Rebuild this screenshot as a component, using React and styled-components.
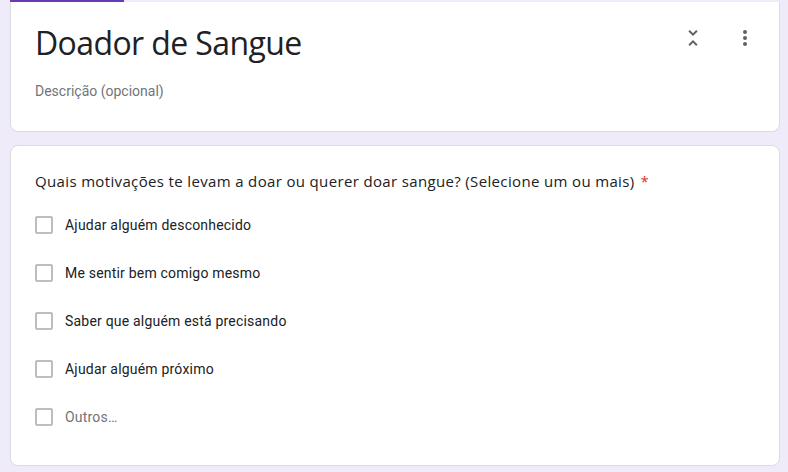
import React from "react";
import styled, { createGlobalStyle } from "styled-components";

const GlobalStyle = createGlobalStyle`
  html, body {
    margin: 0;
    padding: 0;
    background: #f0ebf8;
  }
  body {
    font-family: Roboto, "Liberation Sans", Arial, sans-serif;
  }
`;

const Page = styled.div`
  width: 788px;
  height: 472px;
  overflow: hidden;
  padding: 0 8px 0 10px;
  box-sizing: border-box;
  display: flex;
  flex-direction: column;
`;

const TabIndicator = styled.div`
  width: 114px;
  height: 2px;
  background: #673ab7;
`;

const Card = styled.div`
  background: #fff;
  border: 1px solid #dadce0;
  border-radius: ${(p) => (p.$flatTop ? "0 0 8px 8px" : "8px")};
  border-top: ${(p) => (p.$flatTop ? "none" : "1px solid #dadce0")};
  box-sizing: border-box;
  margin-top: ${(p) => p.$gap || 0}px;
  position: relative;
`;

const HeaderCard = styled(Card)`
  height: 130px;
  padding: 20px 24px 0 24px;
`;

const Title = styled.div`
  font-family: "Open Sans", Roboto, sans-serif;
  font-size: 32px;
  line-height: 42px;
  color: #202124;
  letter-spacing: -0.6px;
`;

const Description = styled.div`
  margin-top: 19px;
  font-size: 14px;
  color: #70757a;
`;

const Actions = styled.div`
  position: absolute;
  top: 24px;
  right: 22px;
  display: flex;
  gap: 28px;
  align-items: center;
`;

const IconBtn = styled.div`
  width: 24px;
  height: 24px;
  display: flex;
  align-items: center;
  justify-content: center;
  color: #5f6368;
`;

const QuestionCard = styled(Card)`
  height: 321px;
  padding: 23px 24px 0 24px;
`;

const Question = styled.div`
  font-family: "Open Sans", Roboto, sans-serif;
  font-size: 15px;
  line-height: 24px;
  color: #202124;
  letter-spacing: 0.35px;
`;

const Required = styled.span`
  color: #d93025;
  margin-left: 6px;
`;

const Options = styled.div`
  margin-top: 8px;
  display: flex;
  flex-direction: column;
`;

const Option = styled.label`
  display: flex;
  align-items: center;
  height: 48px;
  gap: 12px;
  font-size: 14px;
  color: ${(p) => (p.$muted ? "#70757a" : "#202124")};
  letter-spacing: 0.2px;
`;

const Box = styled.span`
  width: 18px;
  height: 18px;
  border: 2px solid #bdbdbd;
  border-radius: 2px;
  box-sizing: border-box;
  flex-shrink: 0;
`;

const options = [
  "Ajudar alguém desconhecido",
  "Me sentir bem comigo mesmo",
  "Saber que alguém está precisando",
  "Ajudar alguém próximo",
];

export default function App() {
  return (
    <>
      <GlobalStyle />
      <Page>
        <TabIndicator />
        <HeaderCard $flatTop>
          <Title>Doador de Sangue</Title>
          <Description>Descrição (opcional)</Description>
          <Actions>
            <IconBtn>
              <svg width="24" height="24" viewBox="0 0 24 24" fill="currentColor">
                <path d="M7.41 18.59L8.83 20 12 16.83 15.17 20l1.41-1.41L12 14l-4.59 4.59zm9.18-13.18L15.17 4 12 7.17 8.83 4 7.41 5.41 12 10l4.59-4.59z" />
              </svg>
            </IconBtn>
            <IconBtn>
              <svg width="24" height="24" viewBox="0 0 24 24" fill="currentColor">
                <circle cx="12" cy="6" r="2" />
                <circle cx="12" cy="12" r="2" />
                <circle cx="12" cy="18" r="2" />
              </svg>
            </IconBtn>
          </Actions>
        </HeaderCard>
        <QuestionCard $gap={13}>
          <Question>
            Quais motivações te levam a doar ou querer doar sangue? (Selecione um ou mais)
            <Required>*</Required>
          </Question>
          <Options>
            {options.map((o) => (
              <Option key={o}>
                <Box />
                {o}
              </Option>
            ))}
            <Option $muted>
              <Box />
              Outros…
            </Option>
          </Options>
        </QuestionCard>
      </Page>
    </>
  );
}
